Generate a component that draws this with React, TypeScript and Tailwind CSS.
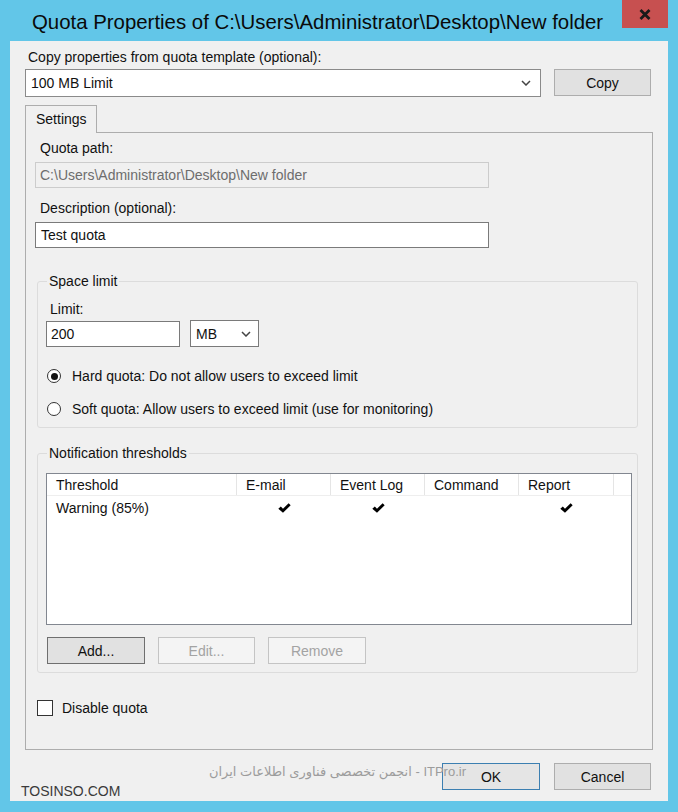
import React from "react";

function Chevron() {
  return (
    <svg width="10" height="6" viewBox="0 0 10 6">
      <path d="M1 1 L5 5 L9 1" stroke="#444" strokeWidth="1.5" fill="none" />
    </svg>
  );
}

function Check() {
  return (
    <svg width="13" height="11" viewBox="0 0 12 10">
      <path d="M0.3 5.3 L2.6 3.2 L4.6 5.3 L9.8 0.2 L11.7 2 L4.6 9 Z" fill="#000" />
    </svg>
  );
}

const cols = [
  { name: "Threshold", w: "w-[190px]" },
  { name: "E-mail", w: "w-[94px]" },
  { name: "Event Log", w: "w-[94px]" },
  { name: "Command", w: "w-[94px]" },
  { name: "Report", w: "w-[95px]" },
];

export default function App() {
  return (
    <div className="w-[678px] h-[812px] bg-[#62c6e8] flex flex-col font-['Liberation_Sans','DejaVu_Sans',sans-serif] text-[14px] leading-[16px] text-[#111]">
      {/* Title bar */}
      <div className="h-[41px] shrink-0 flex items-start">
        <div className="pl-[32px] pt-[10px] text-[20.4px] leading-[24px] text-[#0a0a0a] whitespace-nowrap">
          Quota Properties of C:\Users\Administrator\Desktop\New folder
        </div>
        <div className="ml-auto mr-[10px] w-[46px] h-[28px] bg-[#c75050] flex items-center justify-center">
          <svg width="12" height="11" viewBox="0 0 12 11">
            <path d="M1.5 1 L10.5 10 M10.5 1 L1.5 10" stroke="#1a1a1a" strokeWidth="2.8" />
          </svg>
        </div>
      </div>

      {/* Content */}
      <div className="relative mx-[10px] h-[760px] shrink-0 bg-[#f0f0f0] flex flex-col px-[15px] pt-[8px]">
        <div className="ml-[3px]">Copy properties from quota template (optional):</div>
        <div className="mt-[4px] flex items-start gap-[13px]">
          <div className="w-[516px] h-[28px] bg-white border border-[#8a8a8a] flex items-center pl-[5px] pr-[9px]">
            <span>100 MB Limit</span>
            <span className="ml-auto flex">
              <Chevron />
            </span>
          </div>
          <button className="w-[97px] h-[27px] bg-[#e1e1e1] border border-[#adadad] text-[#111]">Copy</button>
        </div>

        {/* Tab */}
        <div className="mt-[8px] relative z-10 -mb-[1px] w-[72px] h-[28px] border border-b-0 border-[#adadad] bg-[#f0f0f0] pl-[10px] pt-[5px]">
          Settings
        </div>

        {/* Tab panel */}
        <div className="w-[628px] h-[618px] border border-[#adadad] flex flex-col pl-[9px] pt-[7px]">
          <div className="ml-[5px]">Quota path:</div>
          <div className="mt-[6px] w-[454px] h-[26px] bg-[#f0f0f0] border border-[#cccccc] text-[#6d6d6d] flex items-center pl-[4px]">
            C:\Users\Administrator\Desktop\New folder
          </div>
          <div className="mt-[12px] ml-[5px]">Description (optional):</div>
          <div className="mt-[6px] w-[454px] h-[26px] bg-white border border-[#7a7a7a] flex items-center pl-[5px]">
            Test quota
          </div>

          {/* Space limit */}
          <fieldset className="mt-[25px] ml-[2px] w-[601px] border border-[#dcdcdc] rounded-[3px]">
            <legend className="ml-[9px] px-[2px] leading-[16px]">Space limit</legend>
            <div className="pl-[8px] pb-[10px] flex flex-col">
              <div className="mt-[12px] ml-[4px]">Limit:</div>
              <div className="mt-[3px] flex items-end">
                <div className="w-[134px] h-[26px] bg-white border border-[#7a7a7a] flex items-center pl-[4px]">200</div>
                <div className="ml-[10px] w-[69px] h-[27px] bg-white border border-[#7a7a7a] flex items-center pl-[5px] pr-[7px]">
                  <span>MB</span>
                  <span className="ml-auto flex">
                    <Chevron />
                  </span>
                </div>
              </div>
              <div className="mt-[21px] flex items-center h-[16px]">
                <span className="ml-[1px] w-[14px] h-[14px] rounded-full border border-[#333] bg-white flex items-center justify-center">
                  <span className="w-[7px] h-[7px] rounded-full bg-[#111]" />
                </span>
                <span className="ml-[11px]">Hard quota: Do not allow users to exceed limit</span>
              </div>
              <div className="mt-[17px] flex items-center h-[16px]">
                <span className="ml-[1px] w-[14px] h-[14px] rounded-full border border-[#333] bg-white" />
                <span className="ml-[11px]">Soft quota: Allow users to exceed limit (use for monitoring)</span>
              </div>
            </div>
          </fieldset>

          {/* Notification thresholds */}
          <fieldset className="mt-[17px] ml-[2px] w-[601px] border border-[#dcdcdc] rounded-[3px]">
            <legend className="ml-[9px] px-[2px] leading-[16px]">Notification thresholds</legend>
            <div className="pl-[8px] pb-[8px] flex flex-col">
              <div className="mt-[12px] w-[586px] h-[152px] bg-white border border-[#828790] flex flex-col">
                <div className="h-[22px] flex border-b border-[#eeeeee]">
                  {cols.map((c) => (
                    <div key={c.name} className={`${c.w} h-full flex items-center pl-[9px] border-r border-[#e5e5e5]`}>
                      {c.name}
                    </div>
                  ))}
                </div>
                <div className="h-[24px] flex items-center">
                  <div className="w-[190px] pl-[9px]">Warning (85%)</div>
                  <div className="w-[94px] flex justify-center">
                    <Check />
                  </div>
                  <div className="w-[94px] flex justify-center">
                    <Check />
                  </div>
                  <div className="w-[94px]" />
                  <div className="w-[95px] flex justify-center">
                    <Check />
                  </div>
                </div>
              </div>
              <div className="mt-[12px] flex gap-[13px] ml-[1px]">
                <button className="w-[98px] h-[27px] bg-[#e1e1e1] border border-[#6f6f6f] text-[#111]">Add...</button>
                <button className="w-[97px] h-[27px] bg-[#f4f4f4] border border-[#c4c4c4] text-[#a3a3a3]">Edit...</button>
                <button className="w-[98px] h-[27px] bg-[#f4f4f4] border border-[#c4c4c4] text-[#a3a3a3]">Remove</button>
              </div>
            </div>
          </fieldset>

          <div className="mt-[27px] ml-[2px] flex items-center">
            <span className="w-[16px] h-[16px] bg-white border border-[#333]" />
            <span className="ml-[9px]">Disable quota</span>
          </div>
        </div>

        {/* Bottom buttons */}
        <div className="mt-[13px] flex justify-end gap-[14px] mr-[2px]">
          <button className="w-[98px] h-[27px] bg-[#e5e5e5] border border-[#3c7fb1] text-[#111]">OK</button>
          <button className="w-[97px] h-[27px] bg-[#e1e1e1] border border-[#adadad] text-[#111]">Cancel</button>
        </div>

        {/* Watermarks */}
        <div dir="rtl" className="absolute right-[202px] top-[723px] text-[13px] leading-[16px] text-[#9c9c9c] whitespace-nowrap">
          ITPro.ir - انجمن تخصصی فناوری اطلاعات ایران
        </div>
        <div className="absolute left-[11px] top-[742px] text-[14px] leading-[16px] text-[#3a3a3a]">TOSINSO.COM</div>
      </div>
    </div>
  );
}
